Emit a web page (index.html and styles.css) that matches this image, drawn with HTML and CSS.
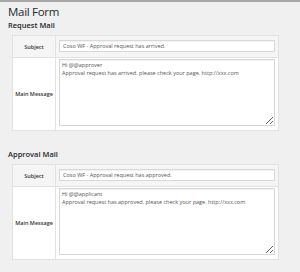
FILE: index.html
```html
<!DOCTYPE html>
<html>
<head>
    <meta name="viewport" content="width=device-width, initial-scale=1.0">
    <title>Mail Form</title>
    <link rel="stylesheet" href="styles.css">
</head>
<body>
    <div class="wrap">
        <h1>Mail Form</h1>

        <h2>Request Mail</h2>
        <table class="form-table">
            <tr class="row-subject">
                <th>Subject</th>
                <td><input type="text" spellcheck="false" value="Coso WF - Approval request has arrived."></td>
            </tr>
            <tr class="row-message">
                <th>Main Message</th>
                <td><textarea spellcheck="false">Hi @@approver
Approval request has arrived. please check your page. http://xxx.com</textarea></td>
            </tr>
        </table>

        <h2 class="second">Approval Mail</h2>
        <table class="form-table">
            <tr class="row-subject">
                <th>Subject</th>
                <td><input type="text" spellcheck="false" value="Coso WF - Approval request has approved."></td>
            </tr>
            <tr class="row-message">
                <th>Main Message</th>
                <td><textarea spellcheck="false">Hi @@applicant
Approval request has approved. please check your page. http://xxx.com</textarea></td>
            </tr>
        </table>
    </div>
</body>
</html>
```

FILE: styles.css
```css
body {
    margin: 0;
    background-color: #f0f0f0;
    border-top: 2px solid #a8a8a8;
    font-family: "Open Sans", "Noto Sans", sans-serif;
    color: #23282d;
}
.wrap {
    padding: 1px 21px 0 12px;
}
h1 {
    font-size: 11.5px;
    font-weight: 400;
    letter-spacing: -0.3px;
    line-height: 14px;
    margin: 2px 0 1px -4px;
}
h2 {
    font-size: 7.5px;
    font-weight: 600;
    line-height: 10px;
    margin: 0 0 5px -4px;
}
h2.second {
    margin-top: 18px;
}
.form-table {
    width: 100%;
    border-collapse: collapse;
    border: 1px solid #e2e2e2;
    background-color: #fff;
}
.form-table th {
    width: 42px;
    font-size: 5.5px;
    font-weight: 600;
    color: #333;
    text-align: center;
    border-right: 1px solid #e2e2e2;
    padding: 0;
}
.form-table td {
    padding: 0 3px 0 3px;
}
.row-subject {
    background-color: #f5f5f5;
    border-bottom: 1px solid #e2e2e2;
}
.row-subject td {
    padding-top: 4px;
    padding-bottom: 5px;
}
.row-message td {
    padding-top: 1px;
    padding-bottom: 4px;
}
input, textarea {
    display: block;
    width: 100%;
    box-sizing: border-box;
    font-family: "Open Sans", "Noto Sans", sans-serif;
    font-size: 5.5px;
    color: #555;
    background-color: #fff;
    border: 1px solid #d8d8d8;
    box-shadow: inset 0 1px 1px rgba(0, 0, 0, 0.06);
    margin: 0;
}
input {
    height: 12px;
    padding: 0 3px;
}
textarea {
    height: 67px;
    padding: 1px 2px;
    line-height: 8px;
    resize: vertical;
}
```
